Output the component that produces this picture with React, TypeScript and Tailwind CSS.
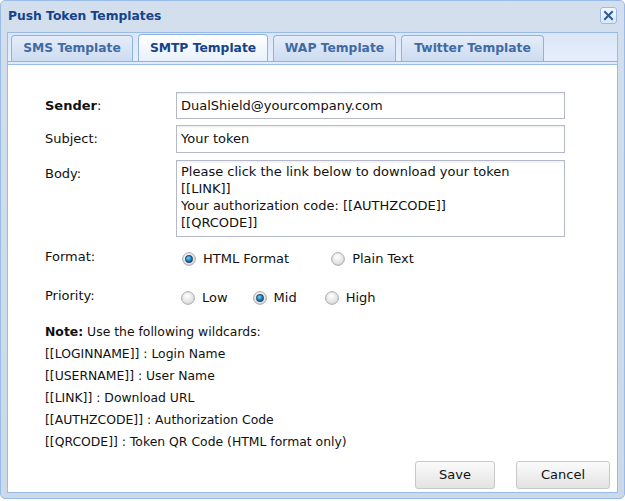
import React from "react";

const font = { fontFamily: '"DejaVu Sans", Tahoma, Verdana, sans-serif' };

function Radio({ checked }: { checked?: boolean }) {
  return (
    <svg width="14" height="14" viewBox="0 0 15 15" className="shrink-0">
      <defs>
        <radialGradient id="rg" cx="45%" cy="35%" r="70%">
          <stop offset="0%" stopColor="#ffffff" />
          <stop offset="100%" stopColor="#d6d6d6" />
        </radialGradient>
        <radialGradient id="rb" cx="40%" cy="35%" r="70%">
          <stop offset="0%" stopColor="#7fd0f5" />
          <stop offset="60%" stopColor="#1a86c8" />
          <stop offset="100%" stopColor="#0b4f86" />
        </radialGradient>
      </defs>
      <circle cx="7.5" cy="7.5" r="6.8" fill="url(#rg)" stroke="#a4a4a4" strokeWidth="1" />
      {checked && (
        <>
          <circle cx="7.5" cy="7.5" r="4.2" fill="#2f4a62" />
          <circle cx="7.5" cy="7.5" r="3.3" fill="url(#rb)" />
        </>
      )}
    </svg>
  );
}

function Tab({ label, active, w }: { label: string; active?: boolean; w: string }) {
  return (
    <div
      className={
        w +
        " flex items-center justify-center rounded-t-[4px] border border-b-0 text-[12.3px] font-bold " +
        (active
          ? "border-[#8db2e3] bg-gradient-to-b from-[#ffffff] to-[#e8f1fc] text-[#15428b] h-[27px]"
          : "border-[#8db2e3] bg-gradient-to-b from-[#e4edf9] to-[#cddcf1] text-[#416aa3] h-[26px]")
      }
    >
      {label}
    </div>
  );
}

const inputCls =
  "border border-[#b5b8c8] bg-gradient-to-b from-[#eeeeee] via-white to-white bg-[length:100%_5px] bg-no-repeat bg-white px-[4px]";

export default function App() {
  return (
    <div className="w-[625px] h-[501px] bg-white" style={font}>
      <div className="w-[625px] h-[499px] rounded-[5px] border border-[#99bbe8] bg-gradient-to-b from-[#d3dfed] to-[#cbd9e8] flex flex-col px-[6px] pb-[5px]">
        {/* title bar */}
        <div className="h-[31px] flex items-center justify-between pl-[1px] pr-[1px]">
          <div className="text-[12.3px] font-bold text-[#15428b]">Push Token Templates</div>
          <div className="w-[17px] h-[17px] rounded-[3px] border border-[#99bbe8] bg-gradient-to-b from-[#f3f8fe] to-[#dbe7f6] flex items-center justify-center mt-[-2px]">
            <svg width="11" height="11" viewBox="0 0 11 11">
              <path d="M2 2 L9 9 M9 2 L2 9" stroke="#2a5a9a" strokeWidth="2" strokeLinecap="square" />
            </svg>
          </div>
        </div>
        {/* tab panel */}
        <div className="flex-1 flex flex-col border border-[#99bbe8] bg-white">
          <div className="bg-gradient-to-b from-[#dbe7f7] to-[#e6eefb] pt-[3px] pl-[3px] flex items-end gap-[5px] h-[29px] border-b border-[#8db2e3]">
            <Tab label="SMS Template" w="w-[122px]" />
            <Tab label="SMTP Template" w="w-[130px]" active />
            <Tab label="WAP Template" w="w-[123px]" />
            <Tab label="Twitter Template" w="w-[143px]" />
          </div>
          <div className="h-[2px] bg-[#deecfd] border-b border-[#99bbe8] box-content" />
          <div className="flex-1 flex flex-col pl-[37px] pr-[7px] pt-[27px] pb-[3px] text-[13px] text-[#111]">
            <div className="grid grid-cols-[131px_389px] gap-y-[6px] items-start">
              <div className="pt-[4px]"><span className="font-bold">Sender</span>:</div>
              <div className={"h-[27px] flex items-center " + inputCls}>DualShield@yourcompany.com</div>
              <div className="pt-[4px]">Subject:</div>
              <div className={"h-[28px] flex items-center " + inputCls}>Your token</div>
              <div className="pt-[4px] mt-[1px]">Body:</div>
              <div className={"h-[77px] mt-[1px] pt-[2px] leading-[17px] " + inputCls}>
                <div>Please click the link below to download your token</div>
                <div>[[LINK]]</div>
                <div>Your authorization code: [[AUTHZCODE]]</div>
                <div>[[QRCODE]]</div>
              </div>
            </div>
            <div className="grid grid-cols-[131px_389px] mt-[11px] h-[22px] items-center">
              <div className="mt-[-4px]">Format:</div>
              <div className="flex items-center pl-[6px]">
                <Radio checked />
                <span className="ml-[7px]">HTML Format</span>
                <span className="ml-[42px]"><Radio /></span>
                <span className="ml-[7px]">Plain Text</span>
              </div>
            </div>
            <div className="grid grid-cols-[131px_389px] mt-[17px] h-[22px] items-center">
              <div className="mt-[-4px]">Priority:</div>
              <div className="flex items-center pl-[5px]">
                <Radio />
                <span className="ml-[7px]">Low</span>
                <span className="ml-[25px]"><Radio checked /></span>
                <span className="ml-[7px]">Mid</span>
                <span className="ml-[28px]"><Radio /></span>
                <span className="ml-[7px]">High</span>
              </div>
            </div>
            <div className="mt-[12px] text-[12.4px] leading-[22px]">
              <div><span className="font-bold">Note:</span> Use the following wildcards:</div>
              <div>[[LOGINNAME]] : Login Name</div>
              <div>[[USERNAME]] : User Name</div>
              <div>[[LINK]] : Download URL</div>
              <div>[[AUTHZCODE]] : Authorization Code</div>
              <div>[[QRCODE]] : Token QR Code (HTML format only)</div>
            </div>
            <div className="flex justify-end gap-[21px] mt-auto">
              <button className="w-[80px] h-[28px] rounded-[3px] border border-[#c8c8c8] bg-gradient-to-b from-[#fbfbfb] to-[#e3e3e3] text-[13px] text-[#111]">Save</button>
              <button className="w-[94px] h-[28px] rounded-[3px] border border-[#c8c8c8] bg-gradient-to-b from-[#fbfbfb] to-[#e3e3e3] text-[13px] text-[#111]">Cancel</button>
            </div>
          </div>
        </div>
      </div>
    </div>
  );
}
